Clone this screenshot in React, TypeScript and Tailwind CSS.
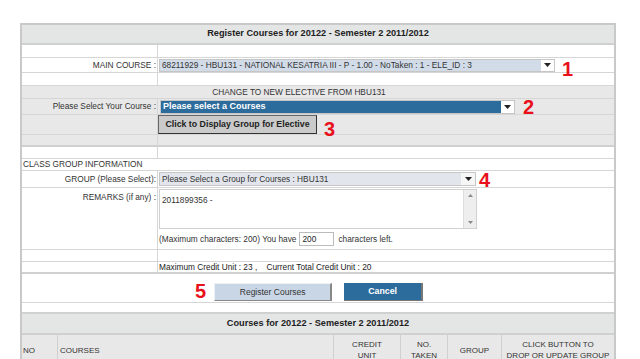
import React from 'react';

const font = { fontFamily: '"Liberation Sans", Arial, sans-serif' };

const Arrow = () => (
  <svg width="7" height="4" viewBox="0 0 7 4" className="shrink-0">
    <path d="M0 0h7L3.5 4z" fill="#222" />
  </svg>
);

const Num: React.FC<{ n: string; className?: string }> = ({ n, className }) => (
  <span className={`text-[20px] font-bold leading-none text-[#e8101a] ${className || ''}`}>{n}</span>
);

const Row: React.FC<{
  h: string;
  gray?: boolean;
  label?: React.ReactNode;
  children?: React.ReactNode;
}> = ({ h, gray, label, children }) => (
  <div className={`flex ${h} border-b border-[#d6d6d6] ${gray ? 'bg-[#e8e8e8]' : 'bg-white'}`}>
    <div className="w-[136px] shrink-0 border-r border-[#d6d6d6] flex items-center justify-end pr-[1px] text-[#333]">
      {label}
    </div>
    <div className="flex-1 flex items-center">{children}</div>
  </div>
);

export default function App() {
  return (
    <div className="w-[640px] h-[359px] bg-white overflow-hidden text-[8.3px] text-[#333]" style={font}>
      <div className="ml-[20px] mt-[23px] w-[596px] border-l-2 border-r-2 border-t-2 border-[#c9c9c9]">
        {/* title */}
        <div className="h-[20px] flex items-center justify-center bg-[#e4e6e6] border-b-2 border-[#d0d0d0] font-bold text-[9.2px] text-[#222]">
          Register Courses for 20122 - Semester 2 2011/2012
        </div>

        <Row h="h-[13px]" />
        <Row h="h-[15px]" label="MAIN COURSE :">
          <div className="ml-[1px] w-[396px] h-[13px] border border-[#c6c6c6] bg-white flex items-center">
            <div className="w-[381px] h-full bg-[#d2dce8] flex items-center pl-[2px] text-[#333]">
              68211929 - HBU131 - NATIONAL KESATRIA III - P - 1.00 - NoTaken : 1 - ELE_ID : 3
            </div>
            <div className="flex-1 flex justify-center">
              <Arrow />
            </div>
          </div>
          <Num n="1" className="ml-[7px] mt-[7px]" />
        </Row>
        <Row h="h-[13px]" />

        {/* gray elective section */}
        <div className="h-[13px] bg-[#e8e8e8] border-b border-[#d6d6d6] flex items-center justify-center pr-[38px] text-[#333]">
          CHANGE TO NEW ELECTIVE FROM HBU131
        </div>
        <Row h="h-[16px]" gray label="Please Select Your Course :">
          <div className="ml-[2px] w-[355px] h-[14px] border border-[#c6c6c6] bg-white flex items-center">
            <div className="w-[340px] h-full bg-[#2c6c9c] flex items-center pl-[2px] text-white font-bold text-[9px]">
              Please select a Courses
            </div>
            <div className="flex-1 flex justify-center">
              <Arrow />
            </div>
          </div>
          <Num n="2" className="ml-[8px] mt-[1px]" />
        </Row>
        <Row h="h-[20px]" gray>
          <div className="w-[159px] h-[19px] bg-[#cacaca] border border-t-[#666] border-l-[#666] border-r-[#333] border-b-[#333] flex items-center justify-center font-bold text-[8.8px] text-[#222]">
            Click to Display Group for Elective
          </div>
          <Num n="3" className="ml-[7px] mt-[8px]" />
        </Row>
        <div className="flex h-[12px] bg-[#e8e8e8] border-b-2 border-[#d0d0d0]">
          <div className="w-[136px] border-r border-[#d6d6d6]" />
        </div>

        <Row h="h-[12px]" />
        <div className="h-[12px] border-b border-[#d6d6d6] flex items-center pl-[1px] text-[#333]">
          CLASS GROUP INFORMATION
        </div>
        <Row h="h-[17px]" label="GROUP (Please Select):">
          <div className="ml-[1px] w-[317px] h-[14px] border border-[#c6c6c6] bg-[#f6f6f6] flex items-center">
            <div className="w-[301px] h-full bg-[#e2e6ec] flex items-center pl-[2px] text-[#333]">
              Please Select a Group for Courses : HBU131
            </div>
            <div className="flex-1 flex justify-center">
              <Arrow />
            </div>
          </div>
          <Num n="4" className="ml-[3px] mt-[2px]" />
        </Row>
        <div className="flex h-[62px] border-b border-[#d6d6d6]">
          <div className="w-[136px] shrink-0 border-r border-[#d6d6d6] flex justify-end pr-[1px] pt-[3px]">
            REMARKS (if any) :
          </div>
          <div className="flex-1 flex flex-col pl-[1px]">
            <div className="mt-[1px] w-[318px] h-[40px] border border-[#d0d0d0] flex">
              <div className="flex-1 pl-[2px] pt-[4px] text-[#333]">2011899356 -</div>
              <div className="w-[13px] bg-[#eeeeee] border-l border-[#dcdcdc] flex flex-col items-center justify-between py-[4px]">
                <svg width="5" height="3" viewBox="0 0 5 3">
                  <path d="M0 3h5L2.5 0z" fill="#888" />
                </svg>
                <svg width="5" height="3" viewBox="0 0 5 3">
                  <path d="M0 0h5L2.5 3z" fill="#888" />
                </svg>
              </div>
            </div>
            <div className="mt-[3px] flex items-center">
              <span>(Maximum characters: 200) You have</span>
              <div className="ml-[3px] w-[35px] h-[14px] border border-[#bbb] flex items-start pl-[2px] text-[#222]">
                200
              </div>
              <span className="ml-[4px]">characters left.</span>
            </div>
          </div>
        </div>
        <Row h="h-[12px]" />
        <div className="flex h-[12px] border-b-2 border-[#d0d0d0]">
          <div className="w-[136px] shrink-0 border-r border-[#d6d6d6]" />
          <div className="flex items-center pl-[1px] text-[#222]">
            Maximum Credit Unit : 23 ,&nbsp;&nbsp;&nbsp; Current Total Credit Unit : 20
          </div>
        </div>

        {/* buttons */}
        <div className="h-[29px] flex items-end pb-[1px] border-b border-[#d6d6d6]">
          <Num n="5" className="ml-[173px]" />
          <div className="ml-[8px] w-[118px] h-[18px] bg-[#c9d6e6] border-t border-l border-t-[#eef2f6] border-l-[#eef2f6] border-r-2 border-b border-r-[#888] border-b-[#888] flex items-center justify-center text-[8.5px] text-[#333]">
            Register Courses
          </div>
          <div className="ml-[12px] w-[79px] h-[18px] bg-[#2c6c9c] border-r-2 border-b border-[#777] flex items-center justify-center text-[8.8px] font-bold text-white">
            Cancel
          </div>
        </div>
        <div className="h-[11px] border-b-2 border-[#d0d0d0]" />

        <div className="h-[21px] flex items-center justify-center bg-[#e4e6e6] border-b-2 border-[#d0d0d0] font-bold text-[9.2px] text-[#222]">
          Courses for 20122 - Semester 2 2011/2012
        </div>
        <div className="flex h-[30px] bg-[#e8e8e8] text-[#333] text-[8px] leading-[11px]">
          <div className="w-[36px] border-r border-[#d0d0d0] flex items-center pl-[1px]">NO</div>
          <div className="w-[276px] border-r border-[#d0d0d0] flex items-center pl-[2px]">COURSES</div>
          <div className="w-[67px] border-r border-[#d0d0d0] flex items-center justify-center text-center">
            CREDIT<br />UNIT
          </div>
          <div className="w-[47px] border-r border-[#d0d0d0] flex items-center justify-center text-center">
            NO.<br />TAKEN
          </div>
          <div className="w-[54px] border-r border-[#d0d0d0] flex items-center justify-center">GROUP</div>
          <div className="flex-1 flex items-center justify-center text-center">
            CLICK BUTTON TO<br />DROP OR UPDATE GROUP
          </div>
        </div>
      </div>
    </div>
  );
}
